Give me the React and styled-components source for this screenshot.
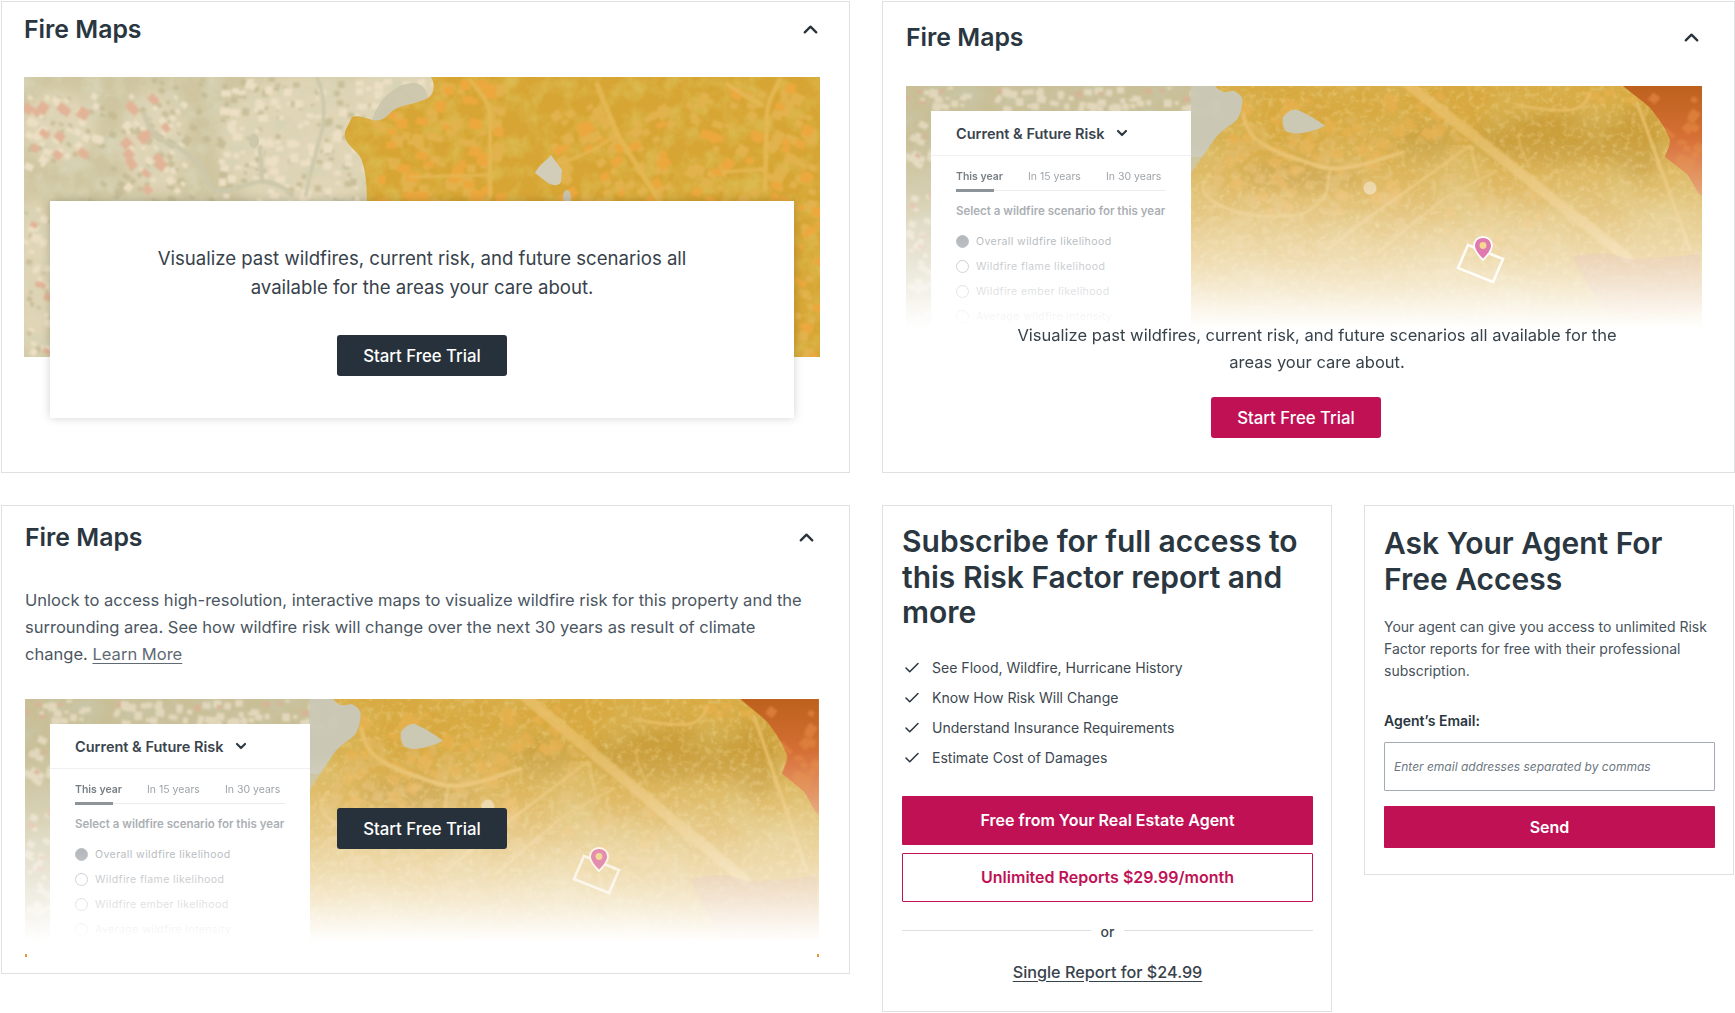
import React, { useMemo } from "react";
import styled, { createGlobalStyle } from "styled-components";
import { Check, ChevronDown, ChevronUp } from "lucide-react";

const Global = createGlobalStyle`
  html, body { margin: 0; padding: 0; background: #fff; }
  body { font-family: Inter, "Liberation Sans", sans-serif; color: #28333d; }
  * { box-sizing: border-box; }
`;

const Page = styled.div`
  display: grid;
  grid-template-columns: 849px 853px;
  grid-template-rows: 472px auto;
  column-gap: 32px;
  row-gap: 32px;
  width: 1735px;
  padding: 1px 0 0 1px;
`;
const Card = styled.section`
  background: #fff;
  border: 1.5px solid #dfe0e2;
  padding: ${(p) => p.$pad};
  align-self: start;
  width: ${(p) => (p.$w ? `${p.$w}px` : "auto")};
  height: ${(p) => p.$h}px;
  min-width: 0;
`;
const TitleRow = styled.div`
  display: flex;
  align-items: center;
  justify-content: space-between;
  height: 30px;
  padding-right: ${(p) => p.$right}px;
`;
const Title = styled.h2`
  margin: 0;
  font-size: 24.8px;
  font-weight: 600;
  line-height: 30px;
  color: #2a3640;
`;
const Frame = styled.div`
  position: relative;
  overflow: hidden;
  width: ${(p) => p.$w}px;
  height: ${(p) => p.$h}px;
  margin-top: ${(p) => p.$top}px;
  & > svg { display: block; width: 100%; height: 100%; }
`;
const FadeVeil = styled.div`
  position: absolute;
  inset: 0;
  background: linear-gradient(
    to bottom,
    rgba(255,255,255,0) 50px,
    rgba(255,255,255,0.2) 100px,
    rgba(255,255,255,0.48) 150px,
    rgba(255,255,255,0.6) 175px,
    rgba(255,255,255,0.74) 200px,
    rgba(255,255,255,0.9) 226px,
    #fff 243px
  );
`;
const Speck = styled.i`
  position: absolute;
  bottom: 1px;
  width: 2px;
  height: 3px;
  background: #e8973a;
  ${(p) => (p.$right ? "right: 0;" : "left: 0;")}
`;
const Panel = styled.div`
  position: absolute;
  left: 25px;
  top: 25px;
  width: 260px;
  height: 240px;
  background: #fff;
`;
const PanelHead = styled.div`
  height: 45px;
  padding-left: 25px;
  display: flex;
  align-items: center;
  gap: 10px;
  font-size: 14.5px;
  font-weight: 600;
  color: #3a444d;
  border-bottom: 1px solid #eeeff0;
`;
const Tabs = styled.div`
  margin: 0 25px 0 25px;
  height: 35px;
  display: flex;
  gap: 25px;
  align-items: center;
  padding-top: 6px;
  border-bottom: 1px solid #e6e7e9;
  position: relative;
  font-size: 10.5px;
  color: #8b9298;
  &::after {
    content: "";
    position: absolute;
    left: 0;
    bottom: -2px;
    width: 38px;
    height: 3px;
    background: #6c757c;
  }
`;
const Tab = styled.span`
  font-weight: ${(p) => (p.$on ? 600 : 400)};
  color: ${(p) => (p.$on ? "#5d666e" : "#8b9298")};
  white-space: nowrap;
`;
const PanelLabel = styled.div`
  margin: 13px 0 0 25px;
  font-size: 11.5px;
  font-weight: 600;
  color: #7f878e;
  white-space: nowrap;
`;
const Options = styled.div`
  margin: 15px 0 0 25px;
  display: flex;
  flex-direction: column;
  gap: 9px;
`;
const Option = styled.div`
  height: 16px;
  display: flex;
  align-items: center;
  gap: 7px;
  font-size: 10.6px;
  letter-spacing: 0.38px;
  color: #6f777e;
  white-space: nowrap;
`;
const Radio = styled.i`
  flex: none;
  width: 13px;
  height: 13px;
  border-radius: 50%;
  border: 1.2px solid #7d858c;
  background: ${(p) => (p.$on ? "#6f777e" : "#fff")};
`;
const Button = styled.button`
  display: block;
  width: ${(p) => p.$w || "170px"};
  height: ${(p) => p.$hh || 41}px;
  background: ${(p) => p.$bg || "#c01155"};
  border: ${(p) => (p.$outline ? "1.5px solid #c01155" : "none")};
  color: ${(p) => (p.$outline ? "#c01155" : "#fff")};
  border-radius: ${(p) => p.$r ?? 2}px;
  font-family: inherit;
  font-size: ${(p) => p.$fs || 16.8}px;
  font-weight: ${(p) => p.$fw || 500};
  padding: 0;
`;
const OverButton = styled(Button)`
  position: absolute;
  left: 312px;
  top: 109px;
`;
const NoticeBox = styled.div`
  position: relative;
  margin: -156px 0 0 26px;
  width: 744px;
  height: 217px;
  background: #fff;
  box-shadow: 0 0 9px rgba(0,0,0,0.18);
  display: flex;
  flex-direction: column;
  align-items: center;
  padding-top: 43px;
`;
const Lead = styled.p`
  position: relative;
  margin: 0;
  font-size: 18.6px;
  line-height: 29px;
  color: #37424b;
  text-align: center;
  width: ${(p) => p.$w}px;
`;
const TrialWrap = styled.div`
  margin-top: 33px;
`;
const LeadB = styled(Lead)`
  margin: -10px 0 0 101px;
  font-size: 16.55px;
  line-height: 27px;
`;
const TrialB = styled.div`
  margin: 21px 0 0 305px;
`;
const Body = styled.p`
  margin: 35px 0 0;
  font-size: 16.55px;
  line-height: 27px;
  color: #4b565f;
  width: 785px;
  a { color: #5f6a73; text-decoration: underline; text-underline-offset: 3px; }
`;
const Col2Row = styled.div`
  display: flex;
  gap: 32px;
  align-items: flex-start;
`;
const BigHead = styled.h2`
  margin: 0;
  font-size: ${(p) => p.$fs}px;
  font-weight: 600;
  line-height: ${(p) => p.$lh}px;
  color: #2a3640;
`;
const Checks = styled.ul`
  list-style: none;
  margin: 27px 0 0;
  padding: 0 0 0 1px;
  display: flex;
  flex-direction: column;
  gap: 10px;
`;
const CheckItem = styled.li`
  display: flex;
  align-items: center;
  gap: 11px;
  height: 20px;
  font-size: 14.05px;
  color: #3c4750;
  & svg { color: #28333d; flex: none; }
`;
const Stack = styled.div`
  margin-top: 28px;
  display: flex;
  flex-direction: column;
  gap: 8px;
`;
const OrRow = styled.div`
  margin-top: 21px;
  display: flex;
  align-items: center;
  gap: 10px;
  font-size: 14px;
  font-weight: 500;
  color: #3c4750;
  &::before, &::after { content: ""; flex: 1; height: 1px; background: #dcdee0; margin-top: -2px; }
`;
const SingleLink = styled.a`
  display: block;
  margin-top: 22px;
  text-align: center;
  font-size: 16.2px;
  font-weight: 500;
  color: #37424b;
  text-decoration: underline;
  text-underline-offset: 3px;
`;
const SmallCopy = styled.p`
  margin: 19px 0 0;
  font-size: 14px;
  line-height: 22px;
  color: #47525b;
`;
const FieldLabel = styled.label`
  display: block;
  margin-top: 29px;
  font-size: 14px;
  font-weight: 600;
  line-height: 20px;
  color: #2a3640;
`;
const EmailInput = styled.input`
  display: block;
  margin-top: 11px;
  width: 100%;
  height: 49px;
  border: 1.5px solid #a3acb3;
  border-radius: 1px;
  padding: 0 9px;
  font-family: inherit;
  font-size: 12px;
  font-style: italic;
  &::placeholder { color: #6d777f; opacity: 1; }
`;
const SendWrap = styled.div`
  margin-top: 15px;
`;

function rng(seed) {
  let a = seed >>> 0;
  return () => {
    a = (a + 0x6d2b79f5) >>> 0;
    let t = a;
    t = Math.imul(t ^ (t >>> 15), t | 1);
    t ^= t + Math.imul(t ^ (t >>> 7), t | 61);
    return ((t ^ (t >>> 14)) >>> 0) / 4294967296;
  };
}

/* clusters: [x, y, w, h, count, minSize, maxSize, angle] */
function roofs(seed, clusters) {
  const r = rng(seed);
  let d = "";
  clusters.forEach(([x, y, w, h, n, a0, a1, ang]) => {
    for (let i = 0; i < n; i++) {
      const px = x + r() * w;
      const py = y + r() * h;
      const s = a0 + r() * (a1 - a0);
      const t = s * (0.6 + r() * 0.5);
      const a = ang + (r() - 0.5) * 0.3;
      const c = Math.cos(a);
      const m = Math.sin(a);
      d += `M${px.toFixed(1)} ${py.toFixed(1)}l${(s * c).toFixed(1)} ${(s * m).toFixed(1)}l${(-t * m).toFixed(1)} ${(t * c).toFixed(1)}l${(-s * c).toFixed(1)} ${(-s * m).toFixed(1)}z`;
    }
  });
  return d;
}

const Grain = ({ id, freq, octaves, dark, seed, gain = 1.8, cut = -0.62 }) => (
  <filter id={id} x="0" y="0" width="100%" height="100%">
    <feTurbulence type="fractalNoise" baseFrequency={freq} numOctaves={octaves} seed={seed} />
    <feColorMatrix
      type="matrix"
      values={`0 0 0 0 ${dark[0]} 0 0 0 0 ${dark[1]} 0 0 0 0 ${dark[2]} ${gain} 0 0 0 ${cut}`}
    />
  </filter>
);
const Soft = ({ id, d = 0.55 }) => (
  <filter id={id} x="-5%" y="-5%" width="110%" height="110%"><feGaussianBlur stdDeviation={d} /></filter>
);

const blobs = (list, fill) =>
  list.map(([cx, cy, rx, ry], i) => <ellipse key={i} cx={cx} cy={cy} rx={rx} ry={ry} fill={fill} />);

function FireScene() {
  const pink = useMemo(() => roofs(11, [[0, 20, 68, 62, 11, 6, 12, 0.6], [100, 15, 55, 100, 13, 6, 11, 0.8], [0, 130, 25, 150, 6, 5, 9, 0.5]]), []);
  const cream = useMemo(() => roofs(12, [[195, 0, 160, 125, 120, 4, 10, 0.08], [0, 15, 75, 70, 36, 4, 9, 0.5], [100, 15, 60, 100, 34, 4, 8, 0.8], [0, 130, 25, 150, 22, 4, 8, 0.4], [330, 0, 80, 25, 18, 5, 9, 0]]), []);
  const tan = useMemo(() => roofs(15, [[195, 0, 160, 125, 80, 3, 7, 0.08], [0, 15, 75, 70, 22, 3, 6, 0.5], [100, 15, 60, 100, 22, 3, 6, 0.8], [0, 130, 25, 150, 16, 3, 6, 0.4], [60, 0, 140, 125, 60, 4, 9, 0.5]]), []);
  const orange = useMemo(() => roofs(13, [[345, 5, 130, 120, 38, 7, 14, 0.1], [525, 40, 110, 85, 20, 7, 13, -0.6], [670, 5, 115, 115, 24, 6, 12, 0.4], [400, 0, 60, 20, 6, 8, 12, 0], [770, 125, 26, 155, 14, 5, 10, 0.2]]), []);
  const lots = useMemo(() => roofs(14, [[345, 5, 130, 120, 70, 6, 12, 0.1], [525, 30, 120, 95, 60, 6, 12, -0.6], [660, 5, 130, 120, 65, 6, 12, 0.4], [770, 125, 26, 155, 22, 5, 10, 0.2]]), []);
  const edge =
    "M407 0C412 8 410 17 404 21C392 27 378 27 368 34C362 41 356 45 348 43C338 40 329 37 327 42C324 50 318 55 322 63C327 72 336 76 338 84C342 96 343 110 343 125L343 280L796 280L796 0Z";
  return (
    <svg viewBox="0 0 796 280" preserveAspectRatio="none" aria-hidden="true">
      <defs>
        <Grain id="a-veg" freq="0.05" octaves={4} dark={[0.68, 0.65, 0.46]} seed={4} gain={2.4} cut={-0.95} />
        <Grain id="a-veg2" freq="0.05" octaves={4} dark={[0.72, 0.53, 0.1]} seed={9} gain={2.2} cut={-0.85} />
        <Soft id="a-soft" d={1} />
        <Soft id="a-wide" d={7} />
        <clipPath id="a-clip"><path d={edge} /></clipPath>
      </defs>
      <rect width="796" height="280" fill="#cfc6a1" />
      <g filter="url(#a-wide)">
        {blobs([[280, 65, 85, 70], [35, 50, 38, 36], [130, 65, 32, 52], [375, 10, 50, 25], [10, 200, 22, 80]], "#e0d5b6")}
      </g>
      <rect width="796" height="280" filter="url(#a-veg)" />
      <g filter="url(#a-soft)">
        <path d={tan} fill="#c0b78f" opacity="0.7" />
        <path d={cream} fill="#ecdfc4" />
        <path d={pink} fill="#e2b497" />
      </g>
      <g fill="none" stroke="#cdc8ab" strokeLinecap="round" filter="url(#a-soft)">
        <path d="M120 37C125 50 128 58 140 64C155 70 165 76 176 88C182 98 182 108 190 112C205 117 218 108 233 105C245 104 258 108 268 118" strokeWidth="4.500" />
        <path d="M293 0C302 22 302 45 294 67C290 85 285 100 282 118" strokeWidth="3.500" />
        <path d="M236 70L238 104" strokeWidth="4.500" />
      </g>
      <ellipse cx="230" cy="64" rx="5" ry="7" fill="#cdc8ab" />
      <g clipPath="url(#a-clip)">
        <rect width="796" height="280" fill="#d7a533" />
        <rect width="796" height="280" filter="url(#a-veg2)" opacity="0.8" />
        <g filter="url(#a-soft)">
          <path d={lots} fill="#e2b24e" />
          <path d={orange} fill="#eca83e" />
        </g>
        <g fill="none" stroke="#e4b752" strokeLinecap="round" filter="url(#a-soft)">
          <path d="M446 3C456 15 466 25 466 40L466 120" strokeWidth="4" />
          <path d="M573 7L593 57L636 125" strokeWidth="5" />
          <path d="M756 3C750 15 743 25 743 38L741 112" strokeWidth="4.500" />
          <path d="M703 7C715 15 725 22 738 28" strokeWidth="4" />
          <path d="M386 100L466 98" strokeWidth="3" />
          <path d="M593 57C570 75 545 85 520 90" strokeWidth="2.500" />
          <path d="M700 95L742 92" strokeWidth="3" />
        </g>
      </g>
      <path d="M404 21C392 27 378 27 368 34C362 41 356 45 348 43C352 30 360 18 374 10C390 2 402 6 404 21Z" fill="#c9c4ac" opacity="0.85" />
      <path d="M527 78L538 93L537 105C534 110 528 108 524 106L511 96C515 88 522 84 527 78Z" fill="#d2cdb9" />
      <ellipse cx="543" cy="120" rx="4" ry="7" fill="#c7c3af" />
    </svg>
  );
}

function RiskScene({ prefix }) {
  const id = (s) => `${prefix}-${s}`;
  const pale = useMemo(() => roofs(21, [[0, 0, 310, 24, 70, 4, 9, 0.1], [0, 25, 25, 235, 44, 4, 9, 0.4], [285, 0, 30, 30, 8, 4, 8, 0.2]]), []);
  const rose = useMemo(() => roofs(22, [[0, 0, 310, 24, 10, 4, 7, 0.3], [0, 25, 25, 235, 8, 4, 8, 0.4]]), []);
  const warm = useMemo(() => roofs(31, [[320, 10, 170, 120, 46, 7, 13, 0.5], [480, 5, 70, 40, 12, 8, 14, 0.7], [530, 95, 120, 85, 16, 6, 11, -0.7], [680, 4, 50, 18, 6, 6, 10, 0]]), []);
  const lots = useMemo(() => roofs(32, [[300, 30, 190, 110, 80, 6, 12, 0.4], [520, 90, 130, 95, 46, 5, 11, -0.7], [490, 40, 70, 35, 12, 6, 11, 0.7], [300, 130, 250, 70, 30, 6, 12, 0.1]]), []);
  const ember = useMemo(() => roofs(33, [[745, 5, 50, 90, 26, 5, 10, 0.6]]), []);
  const edge =
    "M309 0C313 6 318 8 327 5C334 8 338 12 336 20C335 28 333 35 326 40C318 46 312 50 306 60C302 66 298 72 296 75L285 92L250 260L796 260L796 0Z";
  const hot = "M717 0C726 8 736 15 744 23C752 34 760 44 764 57C764 65 760 70 759 75C768 82 775 88 781 93C787 102 790 110 794 115L796 116L796 0Z";
  return (
    <svg viewBox="0 0 796 260" preserveAspectRatio="none" aria-hidden="true">
      <defs>
        <Grain id={id("veg")} freq="0.04" octaves={4} dark={[0.58, 0.56, 0.38]} seed={6} gain={2.2} cut={-0.9} />
        <Grain id={id("veg2")} freq="0.012" octaves={4} dark={[0.71, 0.55, 0.17]} seed={14} gain={2.2} cut={-0.92} />
        <Grain id={id("fine")} freq="0.16" octaves={3} dark={[0.9, 0.72, 0.32]} seed={5} gain={2} cut={-0.95} />
        <Soft id={id("soft")} d={1} />
        <Soft id={id("wide")} d={8} />
        <clipPath id={id("clip")}><path d={edge} /></clipPath>
        <clipPath id={id("hotclip")}><path d={hot} /></clipPath>
        <linearGradient id={id("hot")} x1="0" y1="0" x2="0" y2="1">
          <stop offset="0" stopColor="#bd611d" />
          <stop offset="0.55" stopColor="#da723a" />
          <stop offset="1" stopColor="#e0894f" />
        </linearGradient>
      </defs>
      <rect width="796" height="260" fill="#c9bf97" />
      <rect width="796" height="260" filter={`url(#${id("veg")})`} />
      <g filter={`url(#${id("soft")})`}>
        <path d={pale} fill="#e2d7bb" />
        <path d={rose} fill="#dab295" />
      </g>
      <g clipPath={`url(#${id("clip")})`}>
        <rect width="796" height="260" fill="#d8a940" />
        <g filter={`url(#${id("wide")})`}>
          {blobs([[650, 55, 85, 28], [520, 60, 30, 22], [395, 95, 60, 16], [730, 60, 30, 40]], "#cb9f3a")}
        </g>
        <rect width="796" height="260" filter={`url(#${id("veg2")})`} opacity="0.6" />
        <rect width="796" height="260" filter={`url(#${id("fine")})`} opacity="0.5" />
        <g filter={`url(#${id("soft")})`}>
          <path d={lots} fill="#e1b75f" opacity="0.65" />
          <path d={warm} fill="#ebb34f" opacity="0.6" />
        </g>
        <g fill="none" stroke="#e9c06a" strokeLinecap="round" filter={`url(#${id("soft")})`}>
          <path d="M497 -6L722 182" strokeWidth="11" opacity="0.8" />
          <path d="M337 30C340 42 344 52 351 57C365 68 380 74 394 78C410 84 420 88 434 87C452 86 468 80 481 75L497 70" strokeWidth="4" />
          <path d="M304 93C296 102 295 110 300 116C315 130 335 135 354 137C375 138 392 138 401 133C412 126 420 118 421 110L424 90" strokeWidth="3" opacity="0.8" />
          <path d="M564 63C530 88 505 108 484 123C460 140 440 158 421 173" strokeWidth="2.500" />
          <path d="M591 90C570 100 552 110 537 120C515 138 490 160 471 177" strokeWidth="2.500" opacity="0.8" />
          <path d="M731 17L767 123L784 173" strokeWidth="3" />
          <path d="M611 20C630 24 652 27 667 25C678 22 682 15 684 7" strokeWidth="2.500" />
          <path d="M565 63C567 75 570 88 572 96" strokeWidth="2" />
          <path d="M612 50C614 65 617 75 624 85" strokeWidth="2" opacity="0.7" />
        </g>
      </g>
      <path d="M309 0C313 6 318 8 327 5C334 8 338 12 336 20C335 28 333 35 326 40C318 46 312 50 306 60C302 66 298 72 296 75L285 75L285 0Z" fill="#cac8b6" opacity="0.92" />
      <path d={hot} fill={`url(#${id("hot")})`} />
      <g clipPath={`url(#${id("hotclip")})`} filter={`url(#${id("soft")})`}>
        <path d={ember} fill="#e0833f" opacity="0.8" />
      </g>
      <path d="M377 33C380 28 386 24 391 25C400 29 412 36 419 42C412 46 403 49 394 50C388 51 382 49 379 47C377 43 376 38 377 33Z" fill="#cbc8b4" />
      <ellipse cx="464" cy="108" rx="6.500" ry="7" fill="#e8cf96" />
      <path d="M667 180C678 178 690 177 701 177C712 178 720 183 727 183C750 182 775 180 794 177L796 240L700 240C690 225 675 200 667 180Z" fill="#c98070" opacity="0.38" />
    </svg>
  );
}

const Pin = () => (
  <svg viewBox="0 0 60 55" aria-hidden="true">
    <path d="M17 11L52 25L42 48L7 34Z" fill="none" stroke="#fff" strokeWidth="2.600" strokeLinejoin="miter" opacity="0.95" />
    <path d="M32 26C27 21 23 16 23 11.500C23 6.500 27 3 32 3C37 3 41 6.500 41 11.500C41 16 37 21 32 26Z" fill="#df74ae" stroke="#fff" strokeWidth="1.800" />
    <circle cx="32" cy="11.500" r="3.400" fill="#f3d990" />
  </svg>
);
const PinSpot = styled.div`
  position: absolute;
  left: ${(p) => p.$x}px;
  top: ${(p) => p.$y}px;
  width: 60px;
  height: 55px;
  opacity: ${(p) => p.$o};
  & > svg { display: block; width: 100%; height: 100%; }
`;

const RiskPanel = () => (
  <Panel>
    <PanelHead>
      Current &amp; Future Risk
      <ChevronDown size={16} strokeWidth={3.200} color="#2f3a44" />
    </PanelHead>
    <Tabs>
      <Tab $on>This year</Tab>
      <Tab>In 15 years</Tab>
      <Tab>In 30 years</Tab>
    </Tabs>
    <PanelLabel>Select a wildfire scenario for this year</PanelLabel>
    <Options>
      <Option><Radio $on />Overall wildfire likelihood</Option>
      <Option><Radio />Wildfire flame likelihood</Option>
      <Option><Radio />Wildfire ember likelihood</Option>
      <Option><Radio />Average wildfire intensity</Option>
    </Options>
  </Panel>
);

const Head = ({ right }) => (
  <TitleRow $right={right}>
    <Title>Fire Maps</Title>
    <ChevronUp size={23} strokeWidth={2.400} color="#28333d" />
  </TitleRow>
);

const checks = [
  "See Flood, Wildfire, Hurricane History",
  "Know How Risk Will Change",
  "Understand Insurance Requirements",
  "Estimate Cost of Damages",
];

export default function App() {
  return (
    <Page>
      <Global />
      <Card $h={472} $pad="12px 0 0 22px">
        <Head right={27} />
        <Frame $w={796} $h={280} $top={33}>
          <FireScene />
        </Frame>
        <NoticeBox>
          <Lead $w={560}>
            Visualize past wildfires, current risk, and future scenarios all available for the areas your care about.
          </Lead>
          <TrialWrap>
            <Button $bg="#26313b" $r={3}>Start Free Trial</Button>
          </TrialWrap>
        </NoticeBox>
      </Card>

      <Card $h={472} $pad="20px 0 0 23px">
        <Head right={31} />
        <Frame $w={796} $h={246} $top={34}>
          <RiskScene prefix="b" />
          <RiskPanel />
          <FadeVeil />
          <PinSpot $x={545} $y={148} $o={0.95}><Pin /></PinSpot>
        </Frame>
        <LeadB $w={620}>
          Visualize past wildfires, current risk, and future scenarios all available for the areas your care about.
        </LeadB>
        <TrialB>
          <Button $r={3}>Start Free Trial</Button>
        </TrialB>
      </Card>

      <Card $h={469} $pad="16px 0 0 23px">
        <Head right={31} />
        <Body>
          Unlock to access high-resolution, interactive maps to visualize wildfire risk for this property and the
          surrounding area. See how wildfire risk will change over the next 30 years as result of climate change.{" "}
          <a href="#learn">Learn More</a>
        </Body>
        <Frame $w={794} $h={259} $top={31}>
          <RiskScene prefix="c" />
          <RiskPanel />
          <FadeVeil />
          <PinSpot $x={542} $y={146} $o={0.75}><Pin /></PinSpot>
          <Speck />
          <Speck $right />
          <OverButton $bg="#26313b" $r={3}>Start Free Trial</OverButton>
        </Frame>
      </Card>

      <Col2Row>
        <Card $w={450} $h={507} $pad="18px 18px 0 19px">
          <BigHead $fs={30} $lh={35.5}>Subscribe for full access to this Risk Factor report and more</BigHead>
          <Checks>
            {checks.map((c) => (
              <CheckItem key={c}>
                <Check size={18} strokeWidth={2} />
                {c}
              </CheckItem>
            ))}
          </Checks>
          <Stack>
            <Button $w="100%" $hh={49} $r={1} $fw={600} $fs={16}>Free from Your Real Estate Agent</Button>
            <Button $w="100%" $hh={49} $r={1} $fw={600} $fs={16} $bg="#fff" $outline>Unlimited Reports $29.99/month</Button>
          </Stack>
          <OrRow>or</OrRow>
          <SingleLink href="#single">Single Report for $24.99</SingleLink>
        </Card>
        <Card $w={370} $h={370} $pad="19px 18px 0 19px">
          <BigHead $fs={30} $lh={36}>Ask Your Agent For Free Access</BigHead>
          <SmallCopy>
            Your agent can give you access to unlimited Risk Factor reports for free with their professional subscription.
          </SmallCopy>
          <FieldLabel htmlFor="agent">Agent’s Email:</FieldLabel>
          <EmailInput id="agent" placeholder="Enter email addresses separated by commas" />
          <SendWrap>
            <Button $w="100%" $hh={42} $r={1} $fw={600} $fs={16}>Send</Button>
          </SendWrap>
        </Card>
      </Col2Row>
    </Page>
  );
}
